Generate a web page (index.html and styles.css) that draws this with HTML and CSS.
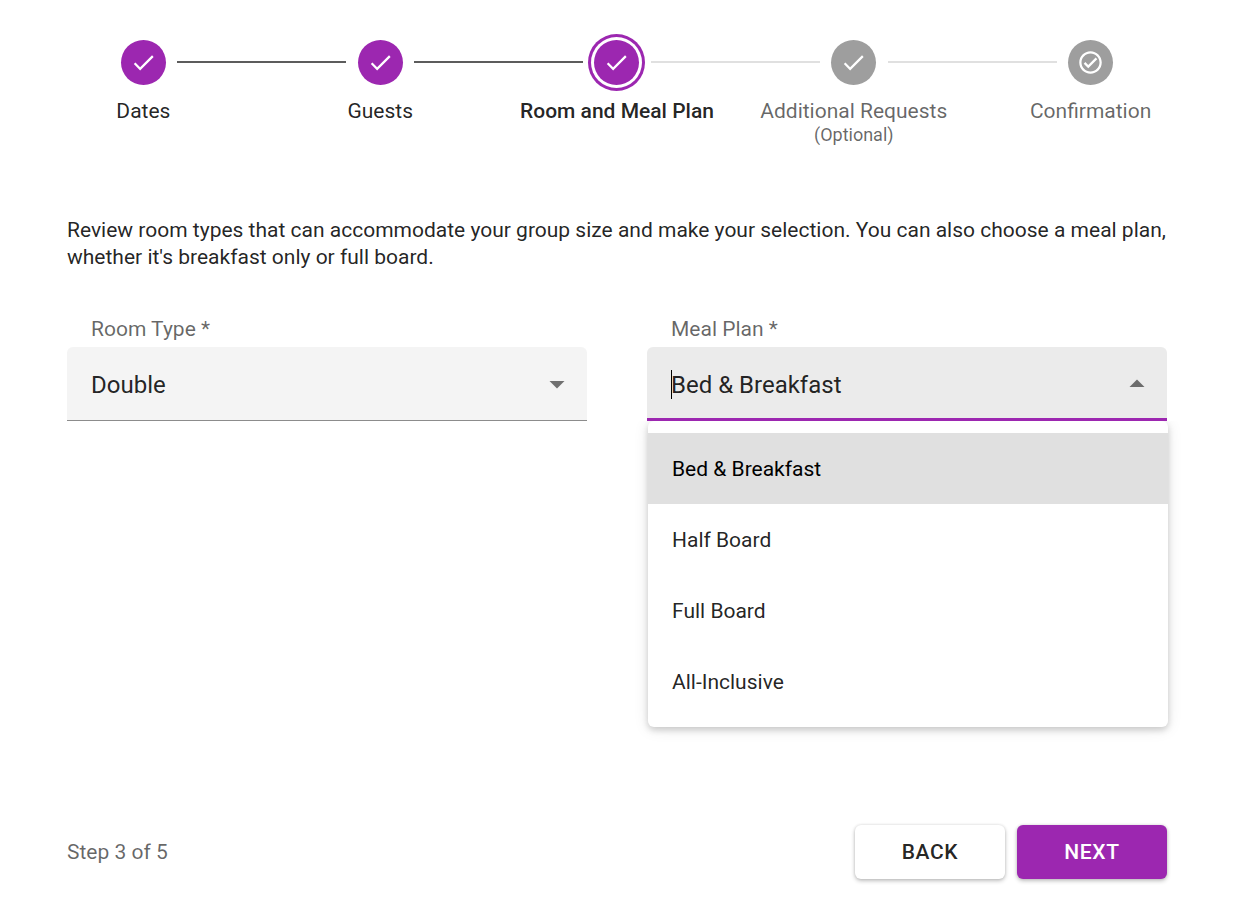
FILE: index.html
```html
<!DOCTYPE html>
<html lang="en">
<head>
    <meta charset="UTF-8">
    <meta name="viewport" content="width=device-width, initial-scale=1.0">
    <title>Room and Meal Plan</title>
    <link rel="stylesheet" href="styles.css">
</head>
<body>
    <ol class="stepper">
        <li class="step done">
            <span class="step-icon">
                <svg viewBox="0 0 24 24"><path d="M9 16.17 4.83 12l-1.42 1.41L9 19 21 7l-1.41-1.41z"/></svg>
            </span>
            <span class="step-label">Dates</span>
        </li>
        <li class="step done">
            <span class="step-icon">
                <svg viewBox="0 0 24 24"><path d="M9 16.17 4.83 12l-1.42 1.41L9 19 21 7l-1.41-1.41z"/></svg>
            </span>
            <span class="step-label">Guests</span>
        </li>
        <li class="step done active" aria-current="step">
            <span class="step-icon">
                <svg viewBox="0 0 24 24"><path d="M9 16.17 4.83 12l-1.42 1.41L9 19 21 7l-1.41-1.41z"/></svg>
            </span>
            <span class="step-label">Room and Meal Plan</span>
        </li>
        <li class="step">
            <span class="step-icon">
                <svg viewBox="0 0 24 24"><path d="M9 16.17 4.83 12l-1.42 1.41L9 19 21 7l-1.41-1.41z"/></svg>
            </span>
            <span class="step-label">Additional Requests</span>
            <span class="step-optional">(Optional)</span>
        </li>
        <li class="step">
            <span class="step-icon">
                <svg class="icon-large" viewBox="0 0 24 24"><path d="M12 2C6.48 2 2 6.48 2 12s4.48 10 10 10 10-4.48 10-10S17.52 2 12 2zm0 18c-4.41 0-8-3.59-8-8s3.59-8 8-8 8 3.59 8 8-3.59 8-8 8zm4.59-12.42L10 14.17l-2.59-2.58L6 13l4 4 8-8z"/></svg>
            </span>
            <span class="step-label">Confirmation</span>
        </li>
    </ol>

    <main class="content">
        <p class="intro">Review room types that can accommodate your group size and make your selection. You can also choose a meal plan, whether it's breakfast only or full board.</p>

        <form class="fields">
            <div class="field">
                <label for="roomType">Room Type *</label>
                <div class="select-box">
                    <select id="roomType">
                        <option>Single</option>
                        <option selected>Double</option>
                        <option>Family</option>
                    </select>
                    <svg class="arrow" viewBox="0 0 24 24"><path d="M7 10l5 5 5-5z"/></svg>
                </div>
            </div>
            <div class="field">
                <label for="mealPlan">Meal Plan *</label>
                <div class="select-box open">
                    <select id="mealPlan">
                        <option selected>Bed &amp; Breakfast</option>
                        <option>Half Board</option>
                        <option>Full Board</option>
                        <option>All-Inclusive</option>
                    </select>
                    <span class="caret"></span>
                    <svg class="arrow" viewBox="0 0 24 24"><path d="M7 10l5 5 5-5z"/></svg>
                    <ul class="menu" role="listbox" aria-label="Meal Plan">
                        <li role="option" aria-selected="true">Bed &amp; Breakfast</li>
                        <li role="option">Half Board</li>
                        <li role="option">Full Board</li>
                        <li role="option">All-Inclusive</li>
                    </ul>
                </div>
            </div>
        </form>
    </main>

    <footer class="footer">
        <span class="progress">Step 3 of 5</span>
        <button type="button" class="btn">BACK</button>
        <button type="button" class="btn btn-primary">NEXT</button>
    </footer>
</body>
</html>
```
FILE: styles.css
```css
* {
    box-sizing: border-box;
}

body {
    margin: 0;
    padding: 40px 37px 33px 25px;
    min-height: 100vh;
    display: flex;
    flex-direction: column;
    background: #fff;
    color: rgba(0, 0, 0, 0.87);
    font-family: Roboto, Arial, sans-serif;
    font-size: 21px;
    line-height: 27px;
}

/* Stepper */
.stepper {
    display: flex;
    margin: 0;
    padding: 0;
    list-style: none;
}

.step {
    position: relative;
    flex: 1;
    display: flex;
    flex-direction: column;
    align-items: center;
    color: rgba(0, 0, 0, 0.6);
    text-align: center;
}

.step + .step::before {
    content: '';
    position: absolute;
    top: 21px;
    left: calc(-50% + 34px);
    right: calc(50% + 34px);
    height: 2px;
    background: #e0e0e0;
}

.step.done + .step.done::before {
    background: #5c5c5c;
}

.step-icon {
    display: flex;
    align-items: center;
    justify-content: center;
    width: 45px;
    height: 45px;
    margin-bottom: 13px;
    border-radius: 50%;
    background: #9e9e9e;
}

.step-icon svg {
    width: 27px;
    height: 27px;
    fill: #fff;
}

.done {
    color: rgba(0, 0, 0, 0.87);
}

.done .step-icon {
    background: #9c27b0;
}

.active .step-icon {
    box-shadow: 0 0 0 3px #fff, 0 0 0 6px #9c27b0;
}

.active .step-label {
    font-weight: 500;
}

.step-optional {
    font-size: 18px;
    line-height: 20px;
}

/* Content */
.content {
    flex: 1;
    padding: 72px 42px 0;
}

.intro {
    margin: 0 0 45px;
}

.fields {
    display: grid;
    grid-template-columns: 1fr 1fr;
    gap: 60px;
}

.field label {
    display: block;
    padding: 0 24px;
    margin-bottom: 4px;
    color: rgba(0, 0, 0, 0.6);
}

.select-box {
    position: relative;
}

.select-box select {
    display: block;
    width: 100%;
    height: 74px;
    padding: 4px 60px 0 24px;
    appearance: none;
    border: 0;
    border-bottom: 1px solid #8c8c8c;
    border-radius: 6px 6px 0 0;
    outline: 0;
    background: #f4f4f4;
    color: rgba(0, 0, 0, 0.87);
    font: inherit;
    font-size: 24px;
}

.select-box.open select {
    border-bottom: 3px solid #9c27b0;
    background: #ebebeb;
    padding-top: 6px;
}

.arrow {
    position: absolute;
    top: 19px;
    right: 12px;
    width: 36px;
    height: 36px;
    fill: rgba(0, 0, 0, 0.54);
    pointer-events: none;
}

.open .arrow {
    transform: rotate(180deg);
}

.caret {
    position: absolute;
    top: 23px;
    left: 24px;
    width: 1px;
    height: 29px;
    background: #000;
}

.menu {
    position: absolute;
    top: 100%;
    left: 1px;
    width: 100%;
    margin: 0;
    padding: 12px 0 10px;
    list-style: none;
    border-radius: 6px;
    background: #fff;
    box-shadow: 0 3px 6px rgba(0, 0, 0, 0.16), 0 2px 15px rgba(0, 0, 0, 0.1);
    clip-path: inset(0 -24px -24px -24px);
}

.menu li {
    padding: 23px 24px 21px;
}

.menu li[aria-selected="true"] {
    background: #e0e0e0;
    color: #000;
}

/* Footer */
.footer {
    display: flex;
    align-items: center;
    gap: 12px;
    padding: 0 42px;
}

.progress {
    flex: 1;
    color: rgba(0, 0, 0, 0.6);
}

.btn {
    width: 150px;
    height: 54px;
    border: 0;
    border-radius: 6px;
    background: #fff;
    color: rgba(0, 0, 0, 0.87);
    font: inherit;
    font-weight: 500;
    letter-spacing: 0.03em;
    box-shadow: 0 2px 4px rgba(0, 0, 0, 0.24), 0 0 3px rgba(0, 0, 0, 0.12);
    cursor: pointer;
}

.btn-primary {
    background: #9c27b0;
    color: #fff;
}
```
